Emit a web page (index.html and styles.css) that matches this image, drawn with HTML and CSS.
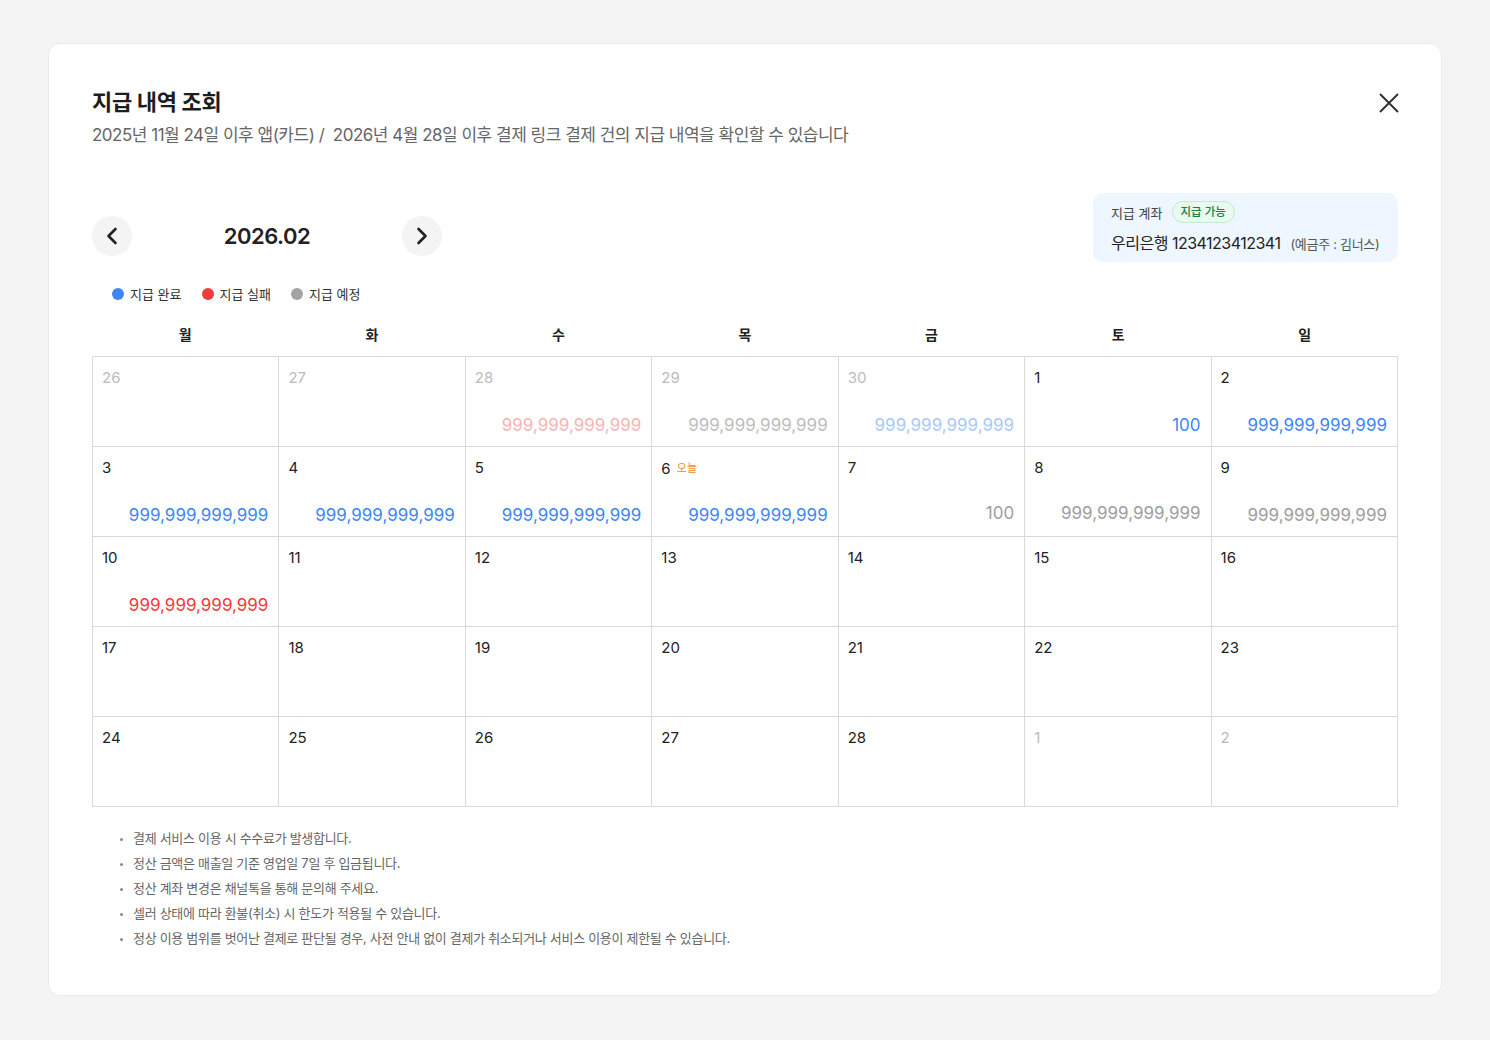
FILE: index.html
```html
<!DOCTYPE html>
<html lang="ko">
<head>
  <meta charset="UTF-8">
  <title>지급 내역 조회</title>
  <link rel="stylesheet" href="styles.css">
</head>
<body>
<div class="modal">
  <div class="modal-head">
    <div>
      <h1 class="modal-title">지급 내역 조회</h1>
      <p class="modal-desc">2025년 11월 24일 이후 앱(카드) /&nbsp; 2026년 4월 28일 이후 결제 링크 결제 건의 지급 내역을 확인할 수 있습니다</p>
    </div>
    <button class="close-btn" type="button">
      <svg width="20" height="20" viewBox="0 0 20 20"><path d="M1 1L19 19M19 1L1 19" stroke="#333" stroke-width="2" fill="none"/></svg>
    </button>
  </div>

  <div class="toolbar">
    <div class="month-nav">
      <button class="nav-btn" type="button">
        <svg width="12" height="18" viewBox="0 0 12 18"><path d="M9.5 2L2.5 9L9.5 16" stroke="#222" stroke-width="2.6" fill="none" stroke-linecap="round" stroke-linejoin="round"/></svg>
      </button>
      <span class="month-label">2026.02</span>
      <button class="nav-btn" type="button">
        <svg width="12" height="18" viewBox="0 0 12 18"><path d="M2.5 2L9.5 9L2.5 16" stroke="#222" stroke-width="2.6" fill="none" stroke-linecap="round" stroke-linejoin="round"/></svg>
      </button>
    </div>
    <div class="account">
      <div class="account-top">
        <span class="account-label">지급 계좌</span>
        <span class="badge">지급 가능</span>
      </div>
      <div class="account-info">
        <span class="account-no">우리은행 1234123412341</span>
        <span class="account-owner">(예금주 : 김너스)</span>
      </div>
    </div>
  </div>

  <ul class="legend">
    <li><span class="dot done"></span>지급 완료</li>
    <li><span class="dot fail"></span>지급 실패</li>
    <li><span class="dot plan"></span>지급 예정</li>
  </ul>

  <div class="weekdays">
    <span>월</span><span>화</span><span>수</span><span>목</span><span>금</span><span>토</span><span>일</span>
  </div>

  <div class="calendar">
    <div class="cell other"><span class="day">26</span></div>
    <div class="cell other"><span class="day">27</span></div>
    <div class="cell other"><span class="day">28</span><span class="amt fail">999,999,999,999</span></div>
    <div class="cell other"><span class="day">29</span><span class="amt plan">999,999,999,999</span></div>
    <div class="cell other"><span class="day">30</span><span class="amt done">999,999,999,999</span></div>
    <div class="cell"><span class="day">1</span><span class="amt done">100</span></div>
    <div class="cell"><span class="day">2</span><span class="amt done">999,999,999,999</span></div>

    <div class="cell"><span class="day">3</span><span class="amt done">999,999,999,999</span></div>
    <div class="cell"><span class="day">4</span><span class="amt done">999,999,999,999</span></div>
    <div class="cell"><span class="day">5</span><span class="amt done">999,999,999,999</span></div>
    <div class="cell"><span class="day">6 <em class="today">오늘</em></span><span class="amt done">999,999,999,999</span></div>
    <div class="cell"><span class="day">7</span><span class="amt plan up">100</span></div>
    <div class="cell"><span class="day">8</span><span class="amt plan up">999,999,999,999</span></div>
    <div class="cell"><span class="day">9</span><span class="amt plan">999,999,999,999</span></div>

    <div class="cell"><span class="day">10</span><span class="amt fail">999,999,999,999</span></div>
    <div class="cell"><span class="day">11</span></div>
    <div class="cell"><span class="day">12</span></div>
    <div class="cell"><span class="day">13</span></div>
    <div class="cell"><span class="day">14</span></div>
    <div class="cell"><span class="day">15</span></div>
    <div class="cell"><span class="day">16</span></div>

    <div class="cell"><span class="day">17</span></div>
    <div class="cell"><span class="day">18</span></div>
    <div class="cell"><span class="day">19</span></div>
    <div class="cell"><span class="day">20</span></div>
    <div class="cell"><span class="day">21</span></div>
    <div class="cell"><span class="day">22</span></div>
    <div class="cell"><span class="day">23</span></div>

    <div class="cell"><span class="day">24</span></div>
    <div class="cell"><span class="day">25</span></div>
    <div class="cell"><span class="day">26</span></div>
    <div class="cell"><span class="day">27</span></div>
    <div class="cell"><span class="day">28</span></div>
    <div class="cell other"><span class="day">1</span></div>
    <div class="cell other"><span class="day">2</span></div>
  </div>

  <ul class="notes">
    <li>결제 서비스 이용 시 수수료가 발생합니다.</li>
    <li>정산 금액은 매출일 기준 영업일 7일 후 입금됩니다.</li>
    <li>정산 계좌 변경은 채널톡을 통해 문의해 주세요.</li>
    <li>셀러 상태에 따라 환불(취소) 시 한도가 적용될 수 있습니다.</li>
    <li>정상 이용 범위를 벗어난 결제로 판단될 경우, 사전 안내 없이 결제가 취소되거나 서비스 이용이 제한될 수 있습니다.</li>
  </ul>
</div>
</body>
</html>
```

FILE: styles.css
```css
* {
  margin: 0;
  padding: 0;
  box-sizing: border-box;
}
body {
  background-color: #f4f4f4;
  font-family: Inter, "Noto Sans CJK KR", sans-serif;
  color: #222;
  padding: 43px 48px 44px;
}
button {
  border: 0;
  background: none;
  cursor: pointer;
}
ul {
  list-style: none;
}

.modal {
  background-color: #fff;
  border: 1px solid #ebebeb;
  border-radius: 12px;
  padding: 43px 43px 44px;
}

/* 상단 제목 */
.modal-head {
  display: flex;
  justify-content: space-between;
  align-items: flex-start;
}
.modal-title {
  font-size: 22px;
  line-height: 30px;
  font-weight: 700;
  letter-spacing: -0.3px;
  color: #1d1d1d;
}
.modal-desc {
  margin-top: 5px;
  font-size: 17px;
  line-height: 26px;
  color: #666;
  letter-spacing: -0.5px;
}
.close-btn {
  width: 20px;
  height: 20px;
  margin-top: 6px;
  margin-right: -1px;
  display: flex;
}

/* 월 이동 + 계좌 정보 */
.toolbar {
  margin-top: 45px;
  display: flex;
  justify-content: space-between;
  align-items: flex-end;
}
.month-nav {
  display: flex;
  align-items: center;
  width: 350px;
  justify-content: space-between;
  margin-bottom: 6px;
}
.nav-btn {
  width: 40px;
  height: 40px;
  border-radius: 50%;
  background-color: #f4f4f4;
  display: flex;
  align-items: center;
  justify-content: center;
}
.month-label {
  font-size: 22px;
  font-weight: 600;
  color: #222;
  letter-spacing: -0.5px;
}
.account {
  width: 305px;
  height: 69px;
  background-color: #eef6ff;
  border-radius: 10px;
  padding: 8px 18px 0;
  white-space: nowrap;
}
.account-top {
  display: flex;
  align-items: center;
  gap: 9px;
}
.account-label {
  font-size: 13px;
  color: #444;
}
.badge {
  font-size: 11.5px;
  line-height: 20px;
  padding: 0 8px;
  border-radius: 11px;
  border: 1px solid #bfeccf;
  background-color: #e9faef;
  color: #17804a;
  font-weight: 500;
}
.account-info {
  margin-top: 7px;
  display: flex;
  align-items: baseline;
  gap: 10px;
}
.account-no {
  font-size: 16px;
  color: #222;
  letter-spacing: -0.5px;
}
.account-owner {
  font-size: 13px;
  color: #555;
  letter-spacing: -0.3px;
}

/* 범례 */
.legend {
  display: flex;
  gap: 20px;
  margin-top: 22px;
  padding-left: 20px;
}
.legend li {
  display: flex;
  align-items: center;
  gap: 6px;
  font-size: 13px;
  line-height: 20px;
  color: #333;
}
.dot {
  width: 12px;
  height: 12px;
  border-radius: 50%;
}
.dot.done { background-color: #3d86f6; }
.dot.fail { background-color: #ef3b3b; }
.dot.plan { background-color: #a3a3a3; }

/* 달력 */
.weekdays {
  display: grid;
  grid-template-columns: repeat(7, 1fr);
  margin-top: 11px;
  margin-bottom: 1px;
}
.weekdays span {
  text-align: center;
  font-size: 14px;
  font-weight: 700;
  line-height: 40px;
  color: #222;
}
.calendar {
  display: grid;
  grid-template-columns: repeat(7, 1fr);
  border-top: 1px solid #d9d9d9;
  border-left: 1px solid #d9d9d9;
}
.cell {
  height: 90px;
  border-right: 1px solid #d9d9d9;
  border-bottom: 1px solid #d9d9d9;
  padding: 11px 10px 10px 9px;
  display: flex;
  flex-direction: column;
  justify-content: space-between;
}
.day {
  font-size: 15px;
  line-height: 20px;
  color: #222;
}
.cell.other .day {
  color: #bbb;
}
.today {
  font-style: normal;
  font-size: 11px;
  color: #f7871e;
  margin-left: 2px;
  vertical-align: 2px;
}
.amt {
  align-self: flex-end;
  font-size: 17px;
  line-height: 22px;
}
.amt.up {
  margin-bottom: 2px;
}
.amt.done { color: #3d86f6; }
.amt.fail { color: #ef3b3b; }
.amt.plan { color: #9e9e9e; }
.cell.other .amt.done { color: #a9c8fb; }
.cell.other .amt.fail { color: #f8b4b4; }
.cell.other .amt.plan { color: #bdbdbd; }

/* 안내 문구 */
.notes {
  margin-top: 19px;
  padding-left: 28px;
}
.notes li {
  position: relative;
  padding-left: 13px;
  font-size: 13px;
  line-height: 25px;
  color: #666;
  letter-spacing: -0.3px;
}
.notes li::before {
  content: "";
  position: absolute;
  left: 0;
  top: 12px;
  width: 3px;
  height: 3px;
  border-radius: 50%;
  background-color: #888;
}
```
